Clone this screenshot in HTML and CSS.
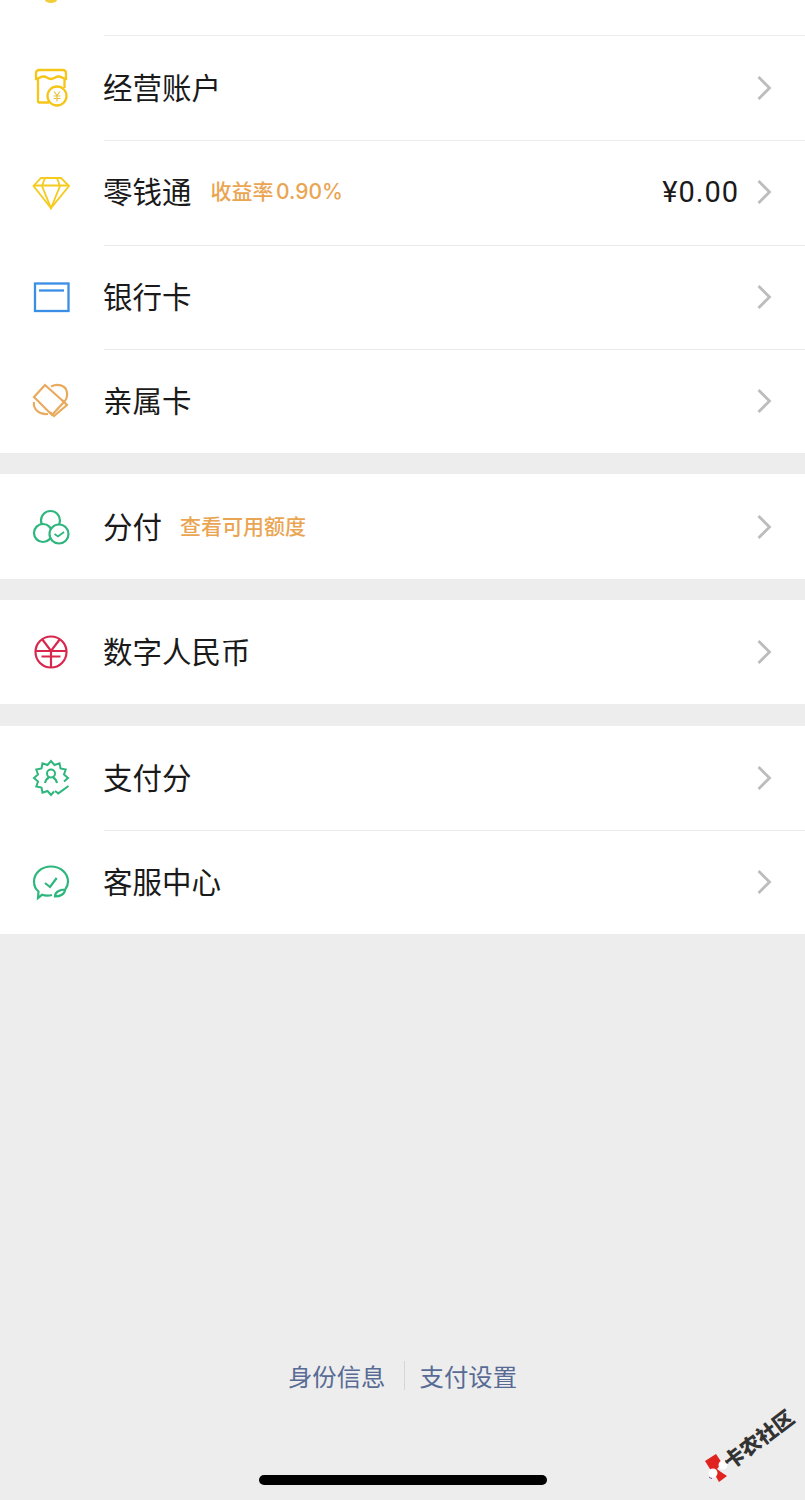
FILE: index.html

```html
<!DOCTYPE html>
<html lang="zh-CN">
<head>
  <meta charset="UTF-8" />
  <meta name="viewport" content="width=device-width, initial-scale=1.0" />
  <title>服务管理</title>
  <link rel="stylesheet" href="styles.css">
</head>
<body>
  <div class="page">
    <section class="group">
      <div class="row-cut">
        <svg class="cut-icon" width="40" height="6" viewBox="0 0 40 6"><path d="M14 0a6 3 0 0 0 12 0z" fill="#f2cd3a"/></svg>
      </div>
      <div class="row">
        <svg class="icon" width="40" height="40" viewBox="0 0 40 40" fill="none" stroke="#f5c518" stroke-width="2.300">
          <path d="M5 11V5a3 3 0 0 1 3-3h24a3 3 0 0 1 3 3v6c-3 0-4-2.500-7.500-2.500S23.500 11 20 11s-4-2.500-7.500-2.500S8 11 5 11z"/>
          <path d="M7 11v22.500a1 1 0 0 0 1 1h10M33.500 11v9"/>
          <circle cx="26" cy="28" r="9.500" fill="#fff"/>
          <path d="M23 23.500l3 4 3-4M22.500 28h7M22.500 30.500h7M26 27.500v6" stroke-width="1.200" stroke="#e8c340"/>
        </svg>
        <span class="label">经营账户</span>
        <svg class="chevron" width="16" height="26" viewBox="0 0 16 26"><path d="M2.500 2l11 11-11 11" fill="none" stroke="#bcbcbc" stroke-width="2.800"/></svg>
      </div>
      <div class="row">
        <svg class="icon" width="40" height="40" viewBox="0 0 40 40" fill="none" stroke="#f5cb1e" stroke-width="1.800">
          <path d="M10 6h20l8 8-18 22L2.500 14z"/>
          <path d="M2.500 13.500h35.500M14 6l-3 8 9 22 9-22-3-8"/>
        </svg>
        <span class="label">零钱通</span>
        <span class="tag tag-rate">收益率 0.90%</span>
        <span class="amount">¥0.00</span>
        <svg class="chevron" width="16" height="26" viewBox="0 0 16 26"><path d="M2.500 2l11 11-11 11" fill="none" stroke="#bcbcbc" stroke-width="2.800"/></svg>
      </div>
      <div class="row">
        <svg class="icon" width="40" height="40" viewBox="0 0 40 40" fill="none" stroke="#3a8ee6" stroke-width="2.300">
          <rect x="4" y="6.500" width="33.500" height="27.500"/>
          <path d="M8 13.500h25"/>
        </svg>
        <span class="label">银行卡</span>
        <svg class="chevron" width="16" height="26" viewBox="0 0 16 26"><path d="M2.500 2l11 11-11 11" fill="none" stroke="#bcbcbc" stroke-width="2.800"/></svg>
      </div>
      <div class="row">
        <svg class="icon" width="40" height="40" viewBox="0 0 40 40" fill="none" stroke="#e9aa5e" stroke-width="2.200">
          <path d="M20 5.500c6-3 15-2 16 6 .5 4-1 7.500-3 9.500"/>
          <path d="M3 21c-1 7 5 13 14 12"/>
          <path d="M14 4l19 17-12 13L3 16z"/>
          <path d="M31 19l5 5-13 11-4-4"/>
        </svg>
        <span class="label">亲属卡</span>
        <svg class="chevron" width="16" height="26" viewBox="0 0 16 26"><path d="M2.500 2l11 11-11 11" fill="none" stroke="#bcbcbc" stroke-width="2.800"/></svg>
      </div>
    </section>

    <section class="group">
      <div class="row">
        <svg class="icon" width="40" height="40" viewBox="0 0 40 40" fill="none" stroke="#2eb67d" stroke-width="2.200">
          <circle cx="19.500" cy="13.500" r="9.500"/>
          <circle cx="12" cy="26" r="9" fill="#fff"/>
          <circle cx="28" cy="27" r="9.500" fill="#fff"/>
          <path d="M23.500 27l3.500 2.500 6-4.500" stroke-width="1.800"/>
        </svg>
        <span class="label">分付</span>
        <span class="tag tag-credit">查看可用额度</span>
        <svg class="chevron" width="16" height="26" viewBox="0 0 16 26"><path d="M2.500 2l11 11-11 11" fill="none" stroke="#bcbcbc" stroke-width="2.800"/></svg>
      </div>
    </section>

    <section class="group">
      <div class="row">
        <svg class="icon" width="40" height="40" viewBox="0 0 40 40" fill="none" stroke="#d8274d" stroke-width="2.200">
          <circle cx="20" cy="20" r="15.500"/>
          <path d="M11 7l9 12 9-12M4.500 19h31M10.500 24.500h19M20 19v16.500"/>
        </svg>
        <span class="label">数字人民币</span>
        <svg class="chevron" width="16" height="26" viewBox="0 0 16 26"><path d="M2.500 2l11 11-11 11" fill="none" stroke="#bcbcbc" stroke-width="2.800"/></svg>
      </div>
    </section>

    <section class="group">
      <div class="row">
        <svg class="icon" width="40" height="40" viewBox="0 0 40 40" fill="none" stroke="#2eb67d" stroke-width="2">
          <path d="M33 23.500L37 20l-4-3.500 1.700-5-5.200-1-1-5.200-5 1.700L20 3l-3.500 4-5-1.700-1 5.200-5.200 1 1.700 5L3 20l4 3.500-1.700 5 5.200 1 1 5.200 5-1.700L20 37l3-3.500"/>
          <circle cx="20" cy="15.500" r="4"/>
          <path d="M14 25c.5-3 2-4.500 4-5.500M26 25c-.5-3-2-4.500-4-5.500"/>
          <path d="M24 33l3.300 2.400L37.500 28"/>
        </svg>
        <span class="label">支付分</span>
        <svg class="chevron" width="16" height="26" viewBox="0 0 16 26"><path d="M2.500 2l11 11-11 11" fill="none" stroke="#bcbcbc" stroke-width="2.800"/></svg>
      </div>
      <div class="row">
        <svg class="icon" width="40" height="40" viewBox="0 0 40 40" fill="none" stroke="#2eb67d" stroke-width="2.200">
          <path d="M21 33c-3 .8-7 .8-10-.2L7 36l.5-6.500C4.500 27 3 23.500 3 19.500 3 11 10.500 4.500 20 4.500S37 11 37 19.500c0 3-1 5.500-2.500 7.500"/>
          <path d="M14 21l5 4 6.700-9"/>
          <path d="M24 34.500c0-4 4-7 10-7 0 4-4 7-10 7z"/>
        </svg>
        <span class="label">客服中心</span>
        <svg class="chevron" width="16" height="26" viewBox="0 0 16 26"><path d="M2.500 2l11 11-11 11" fill="none" stroke="#bcbcbc" stroke-width="2.800"/></svg>
      </div>
    </section>

    <footer class="links">
      <a class="link">身份信息</a>
      <span class="link-sep"></span>
      <a class="link">支付设置</a>
    </footer>
    <div class="home-bar"></div>

    <!-- corner stamp -->
    <svg class="stamp-logo" width="26" height="30" viewBox="0 0 26 30">
      <path d="M1 8l11-7 6 9-5 6 4 3 6 4-8 6-5-9-4-4z" fill="#e0231f"/>
      <circle cx="19" cy="12" r="4.500" fill="#fff"/>
      <circle cx="9" cy="20" r="4.500" fill="#fff"/>
      <path d="M21 7a5 5 0 0 1 3 4M5 24a5 5 0 0 0 3 1.500" fill="none" stroke="#7a4a9a"/>
    </svg>
    <span class="stamp-text">卡农社区</span>
  </div>
</body>
</html>
```

FILE: styles.css

```css
* { box-sizing: border-box; }
html, body { margin: 0; padding: 0; }
body { font-family: "Noto Sans CJK SC", "Noto Sans", sans-serif; background: #ededed; color: #1a1a1a; }

.page { position: relative; width: 805px; height: 1500px; overflow: hidden; display: flex; flex-direction: column; }

.group { background: #fff; margin-bottom: 21.300px; }
.group:last-of-type { margin-bottom: 0; }

.row-cut { height: 36px; position: relative; }
.cut-icon { display: block; margin-left: 31px; }

.row { position: relative; height: 104.300px; display: flex; align-items: center; padding: 0 33px 0 31px; }
.row + .row::before { content: ""; position: absolute; top: 0; left: 104px; right: 0; height: 1px; background: #ececec; }
.row-cut + .row::before { content: ""; position: absolute; top: -1px; left: 104px; right: 0; height: 1px; background: #ececec; }

.icon { flex: none; margin-right: 32px; }
.label { font-size: 29.500px; line-height: 40px; padding-bottom: 4px; }
.tag { font-size: 21px; font-weight: 500; color: #eaa553; margin-left: 18px; padding-bottom: 4px; }
.tag-rate { font-family: Inter, "Noto Sans CJK SC", sans-serif; word-spacing: -3px; margin-left: 19px; }
.amount { margin-left: auto; font-family: Roboto, "Noto Sans", sans-serif; font-size: 29px; letter-spacing: 1px; margin-right: 17px; }
.chevron { flex: none; margin-left: auto; }
.amount + .chevron { margin-left: 0; }

.links { display: flex; align-items: center; justify-content: center; margin-top: 424.500px; }
.link { font-size: 24.400px; line-height: 34px; color: #576b95; }
.link-sep { width: 1px; height: 29px; margin: 0 15px 0 18px; background: #d5d5d5; }

.home-bar { width: 288px; height: 10px; margin: 82px auto 0; border-radius: 5px; background: #000; }

.stamp-logo { position: absolute; left: 704px; top: 1453px; }
.stamp-text { position: absolute; left: 725px; top: 1451px; font-size: 20.500px; line-height: 24px; font-weight: 900; color: #333; transform: rotate(-37deg); transform-origin: 0 50%; white-space: nowrap; }
```
